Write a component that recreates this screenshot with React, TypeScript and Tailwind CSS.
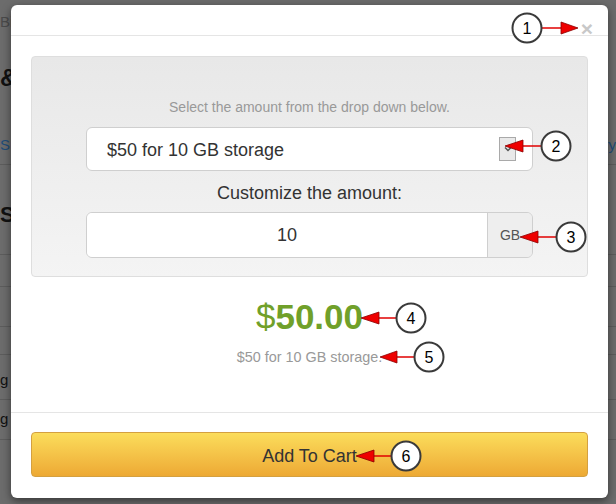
import React from "react";

function Annotation({ cx, cy, n, tipX, baseX, lineEnd }: { cx: number; cy: number; n: string; tipX: number; baseX: number; lineEnd: number }) {
  return (
    <g>
      <line x1={baseX} y1={cy} x2={lineEnd} y2={cy} stroke="#e00000" strokeWidth={1.5} />
      <polygon
        points={`${tipX},${cy} ${baseX},${cy - 6} ${baseX},${cy + 6}`}
        fill="#ee0000"
        stroke="#8a0000"
        strokeWidth={0.8}
      />
      <circle cx={cx} cy={cy} r={14.5} fill="#fff" stroke="#3a3a3a" strokeWidth={2} />
      <text
        x={cx}
        y={cy + 5.5}
        textAnchor="middle"
        fontFamily="'Liberation Sans Narrow','Liberation Sans',Arial,sans-serif"
        fontSize={16}
        fill="#000"
      >
        {n}
      </text>
    </g>
  );
}

export default function App() {
  return (
    <div className="relative w-[616px] h-[504px] overflow-hidden bg-[#6c6c6c] font-['Liberation_Sans',Arial,sans-serif]">
      {/* background page, dimmed */}
      <div className="flex flex-col h-full">
        <div className="h-[44px] pt-[13px] text-[15px] text-[#4a4a4a] leading-[18px]">Bi</div>
        <div className="h-[66px] pt-[20px] text-[24px] font-bold text-[#111] leading-[28px]">&amp;</div>
        <div className="h-[55px] pt-[26px] flex justify-between text-[15px] text-[#1f4c78] leading-[18px] border-b border-[#5c5c5c]">
          <span>Su</span>
          <span>ry</span>
        </div>
        <div className="h-[90px] pt-[37px] text-[22px] font-bold text-[#111] leading-[26px] border-b border-[#5c5c5c]">S</div>
        <div className="h-[32px] border-b border-[#5c5c5c]"></div>
        <div className="h-[40px] border-b border-[#5c5c5c]"></div>
        <div className="h-[28px] border-b border-[#5c5c5c]"></div>
        <div className="h-[45px] pt-[16px] text-[15px] text-[#111] leading-[18px] border-b border-[#5c5c5c]">g</div>
        <div className="h-[40px] pt-[10px] text-[15px] text-[#111] leading-[18px] border-b border-[#5c5c5c]">g</div>
        <div className="flex-1"></div>
      </div>

      {/* modal */}
      <div className="absolute left-[11px] top-[5px] w-[597px] h-[493px] bg-white rounded-[6px] shadow-[0_3px_9px_rgba(0,0,0,0.5)] flex flex-col">
        <div className="h-[31px] border-b border-[#e5e5e5] flex items-start justify-end pr-[15px] pt-[17px]">
          <span className="text-[21px] font-bold leading-[14px] text-[#c8c8c8]">×</span>
        </div>
        <div className="px-[20px] pt-[20px] h-[376px] flex flex-col">
          <div className="h-[221px] rounded-[4px] border border-[#dedede] bg-gradient-to-b from-[#e8e8e8] to-[#f4f4f4] px-[54px] pt-[40px] flex flex-col">
            <div className="text-center text-[14px] leading-[20px] text-[#999]">Select the amount from the drop down below.</div>
            <div className="mt-[10px] h-[44px] bg-white border border-[#cfcfcf] rounded-[6px] flex items-center pl-[20px] pr-[16px]">
              <span className="flex-1 text-[18px] text-[#333] pt-[2px]">$50 for 10 GB storage</span>
              <span className="w-[17px] h-[24px] border border-[#a9a9a9] bg-[#e9e9e9] flex items-center justify-center">
                <svg width="8" height="6" viewBox="0 0 8 6">
                  <path d="M1 1.5 L4 4.5 L7 1.5" stroke="#555" strokeWidth="1.5" fill="none" />
                </svg>
              </span>
            </div>
            <div className="mt-[10px] text-center text-[18px] leading-[24px] text-[#333]">Customize the amount:</div>
            <div className="mt-[7px] h-[46px] flex border border-[#cfcfcf] rounded-[6px] overflow-hidden">
              <div className="flex-1 bg-white flex items-center justify-center text-[18px] text-[#333]">10</div>
              <div className="w-[45px] bg-[#eeeeee] border-l border-[#cfcfcf] flex items-center justify-center text-[14px] text-[#555]">GB</div>
            </div>
          </div>
          <div className="mt-[20px] text-center leading-[40px] text-[35px] text-[#70a02a]">
            <span className="font-normal">$</span>
            <span className="font-bold">50.00</span>
          </div>
          <div className="mt-[11px] text-center text-[14.4px] leading-[18px] text-[#999]">$50 for 10 GB storage.</div>
        </div>
        <div className="border-t border-[#e5e5e5] px-[20px] pt-[19px]">
          <div className="h-[45px] rounded-[4px] border border-[#d4a040] bg-gradient-to-b from-[#fbdd5b] to-[#eda934] flex items-center justify-center pt-[3px] text-[18px] text-[#333]">
            Add To Cart
          </div>
        </div>
      </div>

      {/* annotations */}
      <svg className="absolute left-0 top-0" width="616" height="504" viewBox="0 0 616 504">
        <g>
          <line x1={542} y1={28} x2={562} y2={28} stroke="#e00000" strokeWidth={1.5} />
          <polygon points="578,28 561,22 561,34" fill="#ee0000" stroke="#8a0000" strokeWidth={0.8} />
          <circle cx={527} cy={28} r={14.5} fill="#fff" stroke="#3a3a3a" strokeWidth={2} />
          <text x={527} y={33.5} textAnchor="middle" fontFamily="'Liberation Sans',Arial,sans-serif" fontSize={16} fill="#000">1</text>
        </g>
        <Annotation cx={556} cy={146} n="2" tipX={505} baseX={523} lineEnd={541} />
        <Annotation cx={571} cy={237} n="3" tipX={520} baseX={538} lineEnd={556} />
        <Annotation cx={411} cy={318} n="4" tipX={361} baseX={379} lineEnd={396} />
        <Annotation cx={429} cy={357} n="5" tipX={380} baseX={397} lineEnd={414} />
        <Annotation cx={406} cy={456} n="6" tipX={356} baseX={374} lineEnd={391} />
      </svg>
    </div>
  );
}
